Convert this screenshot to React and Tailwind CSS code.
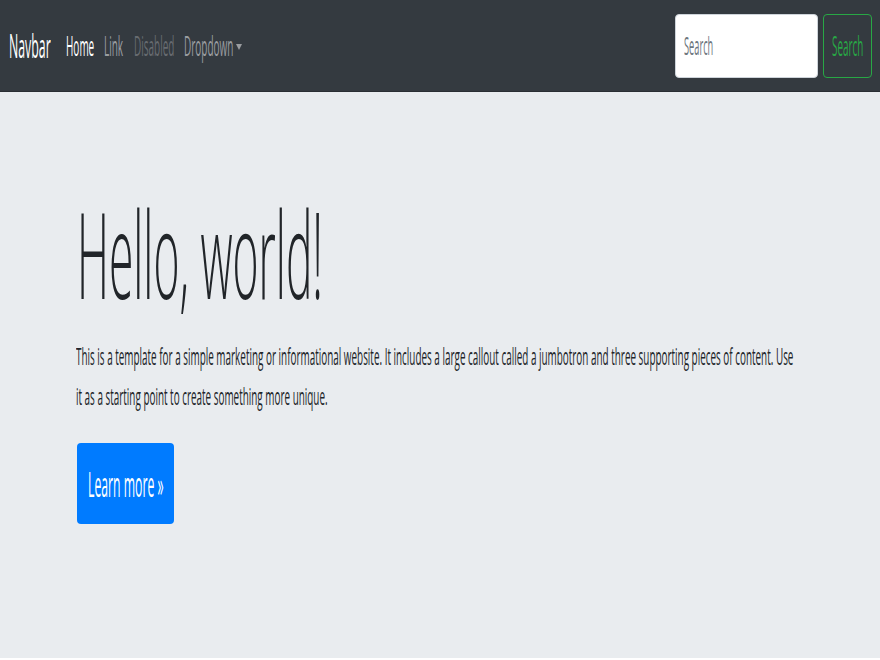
import React from "react";

function Sq({ className = "", children }) {
  return (
    <span className={"inline-block whitespace-nowrap origin-left " + className}>
      {children}
    </span>
  );
}

export default function App() {
  return (
    <div className="w-[880px] h-[660px] overflow-hidden bg-white font-['Open_Sans','Noto_Sans',sans-serif]">
      <nav className="h-[92px] bg-[#343a40] border-b border-[#2a2e33] flex items-center">
        <div className="flex items-center flex-1 pl-[9px]">
          <div className="w-[57px] h-[44px] flex items-center">
            <Sq className="text-[32px] leading-none text-white scale-x-[0.385]">Navbar</Sq>
          </div>
          <div className="w-[38px] h-[40px] flex items-center">
            <Sq className="text-[27px] leading-none text-white scale-x-[0.37]">Home</Sq>
          </div>
          <div className="w-[30px] h-[40px] flex items-center">
            <Sq className="text-[27px] leading-none text-[#9a9da0] scale-x-[0.37]">Link</Sq>
          </div>
          <div className="w-[50px] h-[40px] flex items-center">
            <Sq className="text-[27px] leading-none text-[#676b70] scale-x-[0.37]">Disabled</Sq>
          </div>
          <div className="h-[40px] flex items-center gap-[3px]">
            <div className="w-[49px] h-[40px] flex items-center">
              <Sq className="text-[27px] leading-none text-[#9a9da0] scale-x-[0.37]">Dropdown</Sq>
            </div>
            <span className="mt-[2px] w-0 h-0 border-l-[3px] border-r-[3px] border-t-[6px] border-l-transparent border-r-transparent border-t-[#9a9da0]" />
          </div>
        </div>
        <form className="flex items-center gap-[5px] pr-[8px]">
          <div className="w-[143px] h-[64px] bg-white border border-[#ced4da] rounded-[4px] flex items-center pl-[8px] overflow-hidden">
            <Sq className="text-[25px] leading-none text-[#6c757d] scale-x-[0.37]">Search</Sq>
          </div>
          <div className="w-[49px] h-[64px] border border-[#28a745] rounded-[4px] flex items-center pl-[8px] overflow-hidden">
            <Sq className="text-[27px] leading-none text-[#28a745] scale-x-[0.365]">Search</Sq>
          </div>
        </form>
      </nav>
      <main className="h-[566px] bg-[#e9ecef] pl-[76px] pt-[102px]">
        <div className="h-[119px] overflow-visible pl-[1px]">
          <Sq className="text-[119px] leading-[119px] font-light text-[#212529] scale-x-[0.373]">Hello, world!</Sq>
        </div>
        <div className="mt-[23px] w-[740px] h-[80px]">
          <div className="origin-left scale-x-[0.431] text-[23px] leading-[40px] text-[#212529] w-[1700px]">
            <div className="whitespace-nowrap">
              This is a template for a simple marketing or informational website. It includes a large callout called a jumbotron and three supporting pieces of content. Use
            </div>
            <div className="whitespace-nowrap">it as a starting point to create something more unique.</div>
          </div>
        </div>
        <div className="mt-[27px] ml-[1px] w-[97px] h-[81px] bg-[#007bff] rounded-[4px] flex items-center justify-center overflow-hidden">
          <div className="w-[75px] flex items-center">
            <Sq className="text-[34px] leading-none text-white scale-x-[0.36]">Learn more »</Sq>
          </div>
        </div>
      </main>
    </div>
  );
}
